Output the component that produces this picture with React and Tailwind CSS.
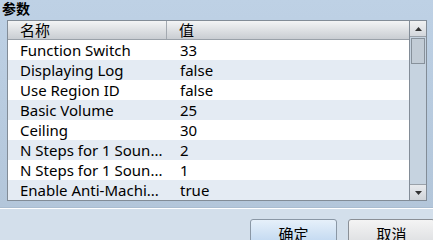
import React from 'react'

const ROWS = [
  ['Function Switch', '33'],
  ['Displaying Log', 'false'],
  ['Use Region ID', 'false'],
  ['Basic Volume', '25'],
  ['Ceiling', '30'],
  ['N Steps for 1 Soun...', '2'],
  ['N Steps for 1 Soun...', '1'],
  ['Enable Anti-Machi...', 'true'],
]

const FONT = { fontFamily: '"Noto Sans", "Noto Sans CJK SC", sans-serif' }

export default function App() {
  return (
    <div className="w-[433px] h-[240px] overflow-hidden flex flex-col text-[15px] text-black" style={FONT}>
      <div className="bg-gradient-to-b from-[#bed1e5] to-[#b3c6da] pb-[6px] border-b border-[#a9bcd0]">
        <div className="h-[20px] pl-[2px] font-bold leading-[17px] text-[14px]">参数</div>
        <div className="ml-[7px] w-[420px] h-[181px] flex border border-[#828c97] bg-white">
          <div className="flex-1 flex flex-col">
            <div className="h-[19px] flex bg-gradient-to-b from-[#f3f4f5] to-[#c9cdd2] border-b border-[#9aa1a9] leading-[19px]">
              <div className="w-[159px] pl-[12px] border-r border-[#a3a9b0]">名称</div>
              <div className="flex-1 pl-[12px]">值</div>
            </div>
            {ROWS.map(([name, value], i) => (
              <div key={i} className={`h-[20px] flex leading-[20px] ${i % 2 ? 'bg-[#e4ebf3]' : 'bg-white'}`}>
                <div className="w-[160px] pl-[12px] whitespace-nowrap overflow-hidden">{name}</div>
                <div className="flex-1 pl-[12px]">{value}</div>
              </div>
            ))}
          </div>
          <div className="w-[17px] flex flex-col bg-[#c6d3e0] border-l border-[#828c97]">
            <div className="h-[16px] flex items-center justify-center bg-gradient-to-b from-[#f1f2f3] to-[#d3d7dc] border-b border-[#9aa1a9]">
              <svg width="7" height="4" viewBox="0 0 7 4"><path d="M0 4 L3.5 0 L7 4 Z" fill="#333" /></svg>
            </div>
            <div className="mx-[1px] mt-[1px] h-[26px] bg-[#c2ccd6] border border-[#87919b]" />
            <div className="flex-1" />
            <div className="h-[16px] flex items-center justify-center bg-gradient-to-b from-[#e9ebee] to-[#d0d4d9] border-t border-[#9aa1a9]">
              <svg width="7" height="4" viewBox="0 0 7 4"><path d="M0 0 L3.5 4 L7 0 Z" fill="#333" /></svg>
            </div>
          </div>
        </div>
      </div>
      <div className="flex-1 bg-[#d3dfeb] border-t border-white flex justify-end items-start pt-[10px] gap-[11px]">
        <button className="shrink-0 w-[87px] h-[30px] rounded-[3px] border border-[#8a97a5] bg-gradient-to-b from-[#e6f0fa] to-[#b9d3ee] leading-[28px]">确定</button>
        <button className="shrink-0 w-[87px] h-[30px] rounded-[3px] border border-[#8a8f96] bg-gradient-to-b from-[#f4f4f4] to-[#d9dbde] leading-[28px] -mr-[2px]">取消</button>
      </div>
    </div>
  )
}
